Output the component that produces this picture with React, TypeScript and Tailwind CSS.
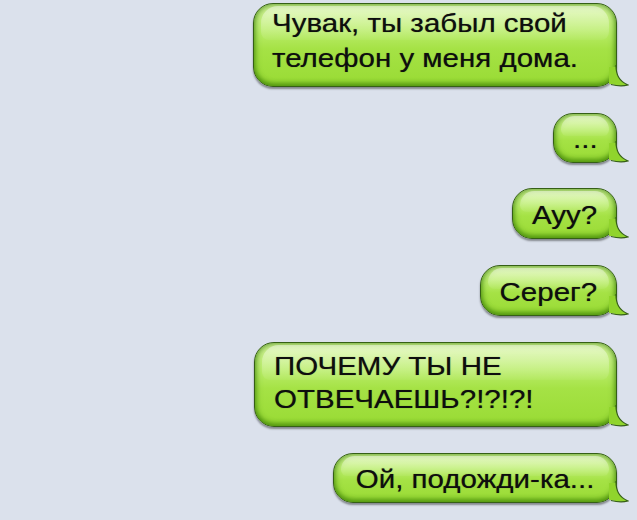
import React from 'react';

// пузырь сообщения в стиле старого iPhone
const BUBBLE =
  'relative rounded-[20px] border border-[#355f16] bg-[linear-gradient(to_bottom,#d4f49c_0%,#bcee6e_30%,#a5e245_55%,#99db34_100%)] shadow-[inset_0_0_7px_rgba(50,120,0,0.85),inset_0_-3px_4px_rgba(70,140,10,0.5),0_2px_2px_rgba(0,0,0,0.4)]';

const TEXT =
  'relative inline-block whitespace-nowrap scale-x-[1.18] text-[25px] text-[#0e0e0e] [text-shadow:0_0_0.8px_rgba(0,0,0,0.55)]';

function Tail() {
  return (
    <svg
      className="absolute right-[-13px] bottom-[-1px] w-[20px] h-[24px]"
      viewBox="0 0 20 24"
    >
      <path d="M0 4 L7 4 C7 12 10 18 19 22 C13 23.5 8 23 3 21 L0 21 Z" fill="#90d42c" />
      <path d="M7 2 C7 12 10 18 19 22 C13 23.5 8 23 2 21.5" fill="none" stroke="#355f16" strokeWidth="1.2" />
    </svg>
  );
}

function Gloss() {
  return (
    <div className="absolute left-[7px] right-[7px] top-[2px] h-[42%] rounded-t-[17px] rounded-b-[8px] bg-gradient-to-b from-white/45 to-white/5 pointer-events-none" />
  );
}

function Single({ text, width, className = '' }: { text: string; width: string; className?: string }) {
  return (
    <div className={`${BUBBLE} ${width} h-[51px] flex items-center justify-center pt-[2px] ${className}`}>
      <Gloss />
      <Tail />
      <span className={`${TEXT} origin-center leading-[28px]`}>{text}</span>
    </div>
  );
}

export default function App() {
  return (
    <div
      className="w-[637px] h-[520px] overflow-hidden bg-[#dbe1ec] flex flex-col items-end pr-[20px] pt-[3px]"
      style={{ fontFamily: '"Liberation Sans", Arial, sans-serif' }}
    >
      <div className={`${BUBBLE} w-[364px] h-[84px] pl-[18px] pt-[2px]`}>
        <Gloss />
        <Tail />
        <span className={`${TEXT} origin-left leading-[35px]`}>
          Чувак, ты забыл свой
          <br />
          телефон у меня дома.
        </span>
      </div>

      <Single text="..." width="w-[64px]" className="mt-[26px] !h-[50px]" />
      <Single text="Ayy?" width="w-[105px]" className="mt-[25px]" />
      <Single text="Серег?" width="w-[137px]" className="mt-[26px]" />

      <div className={`${BUBBLE} w-[363px] h-[85px] pl-[19px] pt-[7px] mt-[26px]`}>
        <Gloss />
        <Tail />
        <span className={`${TEXT} origin-left leading-[33px]`}>
          ПОЧЕМУ ТЫ НЕ
          <br />
          ОТВЕЧАЕШЬ?!?!?!
        </span>
      </div>

      <Single text="Ой, подожди-ка..." width="w-[284px]" className="mt-[26px] !h-[50px]" />
    </div>
  );
}
